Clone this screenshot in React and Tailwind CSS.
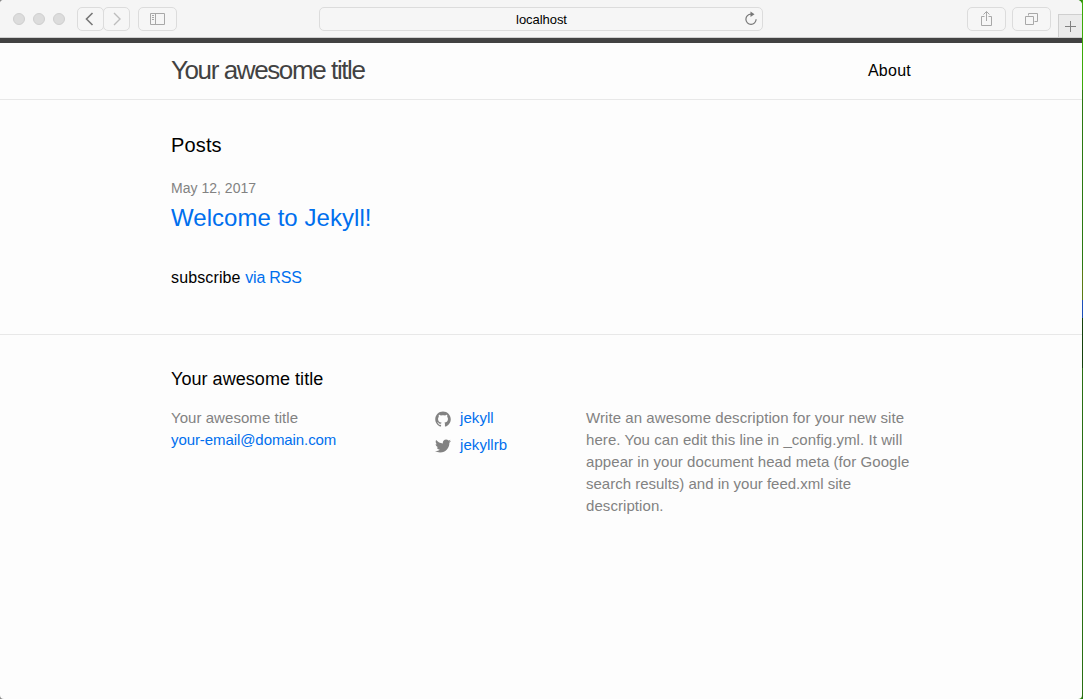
import React from "react";

function ToolButton({ className, children }) {
  return (
    <div className={`box-border flex h-6 shrink-0 items-center justify-center rounded-[5px] border border-[#dcdcdc] bg-[#f6f6f6] ${className}`}>
      {children}
    </div>
  );
}

function Toolbar() {
  return (
    <div className="flex h-[38px] items-start border-b border-[#cfcfcf] bg-[#f5f5f5] pl-[13px]">
      <div className="mt-[13px] flex gap-2">
        <span className="size-3 rounded-full border border-[#cfcfcf] bg-[#dcdcdc]" />
        <span className="size-3 rounded-full border border-[#cfcfcf] bg-[#dcdcdc]" />
        <span className="size-3 rounded-full border border-[#cfcfcf] bg-[#dcdcdc]" />
      </div>
      <div className="mt-[7px] ml-3 flex">
        <ToolButton className="w-[27px]">
          <svg width="25" height="22" fill="none" stroke="#777" strokeWidth="1.6"><path d="M14.500 5 8.500 11l6 6" /></svg>
        </ToolButton>
        <ToolButton className="-ml-px w-[27px]">
          <svg width="25" height="22" fill="none" stroke="#bdbdbd" strokeWidth="1.4"><path d="m10 5 6 6-6 6" /></svg>
        </ToolButton>
      </div>
      <ToolButton className="mt-[7px] ml-2 w-[39px]">
        <svg width="15" height="12" fill="none" stroke="#a8a8a8"><path d="M.5.5h14v11H.5zM5.500.5v11" /><path d="M2 2.500h2M2 4.500h2M2 6.500h2" /></svg>
      </ToolButton>
      <div className="mt-[7px] ml-[142px] flex h-6 w-[444px] items-center rounded-[5px] border border-[#dcdcdc] bg-[#f6f6f6] pr-1">
        <span className="w-[19px]" />
        <span className="flex-1 pt-px text-center text-[13px] leading-[22px] tracking-[-0.05px] text-black">localhost</span>
        <svg width="14" height="16" viewBox="0 0 14 16" fill="none" stroke="#777" strokeWidth="1.2"><path d="M7 3.200A5.100 5.100 0 1 0 12.100 8.300" /><path d="m6.500.5 4 2.700-4 2.700z" fill="#777" stroke="none" /></svg>
      </div>
      <ToolButton className="mt-[7px] ml-[204px] w-[39px]">
        <svg className="-mt-0.5" width="13" height="16" fill="none" stroke="#a8a8a8"><path d="M4.500 6.500h-3v9h10v-9h-3M6.500 11V1.500M3.500 4.500l3-3 3 3" /></svg>
      </ToolButton>
      <ToolButton className="mt-[7px] ml-1.5 w-[39px]">
        <svg width="13" height="14" fill="none" stroke="#a8a8a8"><path d="M.5 4.500h8v8h-8zM3.500 3.500v-2h9v8h-3" /></svg>
      </ToolButton>
      <div className="mt-3.5 ml-[7px] flex h-[23px] w-6 items-center justify-center border-t border-l border-[#cfcfcf] bg-[#ebebeb]">
        <svg width="11" height="11" stroke="#808080"><path d="M5.500 0v11M0 5.500h11" /></svg>
      </div>
    </div>
  );
}

const GITHUB = "M7.999 0.431c-4.285 0-7.76 3.474-7.76 7.761 0 3.428 2.223 6.337 5.307 7.363.388.071.53-.168.53-.374 0-.184-.007-.672-.01-1.320-2.159.469-2.614-1.040-2.614-1.040-.353-.896-.862-1.135-.862-1.135-.705-.481.053-.472.053-.472.779.055 1.189.8 1.189.8.692 1.186 1.816.843 2.258.645.071-.502.271-.843.493-1.037C4.860 11.425 3.049 10.760 3.049 7.786c0-.847.302-1.540.799-2.082-.08-.196-.346-.985.076-2.053 0 0 .652-.209 2.134.796.619-.173 1.283-.259 1.943-.261.660.002 1.323.089 1.943.261 1.482-1.005 2.132-.796 2.132-.796.423 1.068.157 1.857.078 2.053.497.542.798 1.235.798 2.082 0 2.981-1.814 3.637-3.543 3.829.279.240.527.713.527 1.437 0 1.037-.010 1.874-.010 2.129 0 .208.140.449.534.373 3.081-1.028 5.302-3.935 5.302-7.362C15.760 3.906 12.285.431 7.999.431z";
const TWITTER = "M15.969 3.058c-.586.260-1.217.436-1.878.515.675-.405 1.194-1.045 1.438-1.809-.632.375-1.332.647-2.076.793-.596-.636-1.446-1.033-2.387-1.033-1.806 0-3.270 1.464-3.270 3.270 0 .256.029.506.085.745C5.163 5.404 2.753 4.102 1.140 2.124.859 2.607.698 3.168.698 3.767c0 1.134.577 2.135 1.455 2.722-.536-.016-1.040-.164-1.481-.409v.041c0 1.584 1.127 2.906 2.623 3.206-.274.075-.563.114-.861.114-.211 0-.416-.020-.615-.058.416 1.299 1.624 2.245 3.055 2.271-1.119.877-2.529 1.400-4.061 1.400-.264 0-.524-.015-.780-.046 1.447.928 3.166 1.469 5.013 1.469 6.015 0 9.304-4.983 9.304-9.304 0-.142-.003-.283-.009-.423.639-.461 1.193-1.037 1.632-1.692z";

function SocialLink({ path, name }) {
  return (
    <li className="flex h-[27px] items-start">
      <svg className="mt-1 mr-[9px] block" width="16" height="16" viewBox="0 0 16 16" fill="#828282"><path d={path} /></svg>
      <a className="leading-[22px] tracking-[0.07px] text-[#006fee]">{name}</a>
    </li>
  );
}

export default function App() {
  return (
    <div className="flex h-[699px] w-[1083px] overflow-hidden bg-linear-to-r from-[#8a8a8a] from-50% to-[#2f8a10] to-50% font-['Liberation_Sans',Arial,sans-serif]">
      <div className="w-[1082px] shrink-0 overflow-hidden rounded-tl-[4px] rounded-tr-[5px] rounded-b-[4px] bg-[#fdfdfd]">
        <Toolbar />
        <header className="flex h-[62px] items-start justify-between border-t-5 border-b border-t-[#424242] border-b-[#e8e8e8] px-[171px]">
          <a className="text-[26px] leading-[54px] tracking-[-1.4px] text-[#424242]">Your awesome title</a>
          <a className="pt-px text-base leading-[54px] tracking-[0.25px] text-black">About</a>
        </header>
        <main className="h-[234px] px-[171px] pt-[30px] text-black">
          <h1 className="text-xl leading-[30px] tracking-[0.15px]">Posts</h1>
          <p className="mt-[17px] text-sm leading-[22px] tracking-[0.02px] text-[#828282]">May 12, 2017</p>
          <h2 className="mt-px text-2xl leading-9 tracking-[0.05px] text-[#006fee]">Welcome to Jekyll!</h2>
          <p className="mt-[30px] text-base leading-6"><span className="tracking-[0.13px]">subscribe </span><a className="tracking-[-0.2px] text-[#006fee]">via RSS</a></p>
        </main>
        <footer className="h-[365px] border-t border-[#e8e8e8] px-[171px] pt-[31px] text-[15px] leading-[22px] text-[#828282]">
          <h2 className="text-lg leading-[27px] tracking-[0.05px] text-black">Your awesome title</h2>
          <div className="mt-[14px] flex">
            <ul className="w-[264px] shrink-0">
              <li className="tracking-[0.05px]">Your awesome title</li>
              <li><a className="tracking-[-0.08px] text-[#006fee]">your-email@domain.com</a></li>
            </ul>
            <ul className="w-[151px] shrink-0">
              <SocialLink path={GITHUB} name="jekyll" />
              <SocialLink path={TWITTER} name="jekyllrb" />
            </ul>
            <p className="w-[325px] shrink-0 whitespace-nowrap tracking-[0.07px]">
              Write an awesome description for your new site<br />
              here. You can edit this line in _config.yml. It will<br />
              appear in your document head meta (for Google<br />
              <span className="tracking-normal">search results) and in your feed.xml site</span><br />
              description.
            </p>
          </div>
        </footer>
      </div>
      <div className="flex w-px flex-col bg-[#286f12]">
        <div className="h-[90px] bg-[#3caa08]" />
        <div className="h-[180px] bg-[#2b7910]" />
        <div className="h-[30px] bg-[#5a7b13]" />
        <div className="h-[18px] bg-[#1c50b8]" />
        <div className="h-[50px] bg-[#14420c]" />
      </div>
    </div>
  );
}
